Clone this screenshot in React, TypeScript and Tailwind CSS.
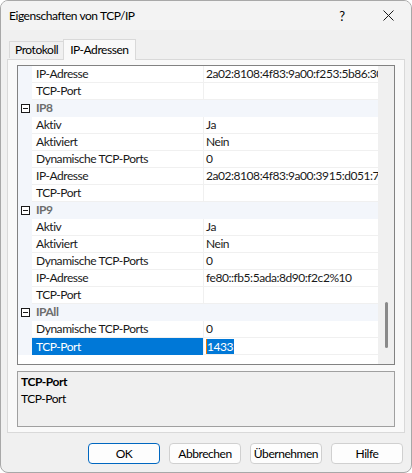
import React from "react"

type Row =
  | { kind: "group"; label: string }
  | { kind: "prop"; label: string; value: string; selected?: boolean }

const rows: Row[] = [
  { kind: "prop", label: "IP-Adresse", value: "2a02:8108:4f83:9a00:f253:5b86:3016:a1c4" },
  { kind: "prop", label: "TCP-Port", value: "" },
  { kind: "group", label: "IP8" },
  { kind: "prop", label: "Aktiv", value: "Ja" },
  { kind: "prop", label: "Aktiviert", value: "Nein" },
  { kind: "prop", label: "Dynamische TCP-Ports", value: "0" },
  { kind: "prop", label: "IP-Adresse", value: "2a02:8108:4f83:9a00:3915:d051:7a3e:1b2c" },
  { kind: "prop", label: "TCP-Port", value: "" },
  { kind: "group", label: "IP9" },
  { kind: "prop", label: "Aktiv", value: "Ja" },
  { kind: "prop", label: "Aktiviert", value: "Nein" },
  { kind: "prop", label: "Dynamische TCP-Ports", value: "0" },
  { kind: "prop", label: "IP-Adresse", value: "fe80::fb5:5ada:8d90:f2c2%10" },
  { kind: "prop", label: "TCP-Port", value: "" },
  { kind: "group", label: "IPAll" },
  { kind: "prop", label: "Dynamische TCP-Ports", value: "0" },
  { kind: "prop", label: "TCP-Port", value: "1433", selected: true },
]

function MinusBox() {
  return (
    <div className="relative w-[9px] h-[9px] border border-[#1a1a1a] bg-white">
      <div className="absolute left-[1px] right-[1px] top-[3px] h-[1px] bg-[#1a1a1a]" />
    </div>
  )
}

function GridRow({ row }: { row: Row }) {
  if (row.kind === "group") {
    return (
      <div className="flex h-[17px] items-center bg-[#f3f6fb] border-b border-[#f3f6fb]">
        <div className="w-[14px] flex justify-center pl-[1px]">
          <MinusBox />
        </div>
        <span className="pl-[4px] font-bold text-[#6d6d6d]">{row.label}</span>
      </div>
    )
  }
  return (
    <div className="flex h-[17px]">
      <div className="w-[14px] shrink-0 bg-[#f3f6fb]" />
      <div
        className={
          row.selected
            ? "w-[171px] shrink-0 flex items-center pl-[4px] bg-[#0078d7] text-white"
            : "w-[171px] shrink-0 flex items-center pl-[4px] border-b border-[#f0f0f0]"
        }
      >
        {row.label}
      </div>
      <div className="w-[1px] shrink-0 bg-[#f0f0f0]" />
      <div className="flex-1 min-w-0 flex items-center pl-[2px] overflow-hidden whitespace-nowrap border-b border-[#f0f0f0]">
        {row.selected ? (
          <span className="flex items-center h-[15px]">
            <span className="w-[1px] h-[15px] bg-[#f07800]" />
            <span className="bg-[#0078d7] text-white h-[15px] leading-[15px] pr-[1px]">{row.value}</span>
          </span>
        ) : (
          row.value
        )}
      </div>
    </div>
  )
}

function DialogButton({ label, primary }: { label: string; primary?: boolean }) {
  return (
    <button
      className={
        primary
          ? "w-[72px] h-[21px] rounded-[4px] border border-[#0067c0] bg-[#fdfdfd] text-black"
          : "w-[72px] h-[21px] rounded-[4px] border border-[#d0d0d0] bg-[#fdfdfd] text-black"
      }
    >
      {label}
    </button>
  )
}

export default function App() {
  return (
    <div
      className="w-[412px] h-[473px] bg-[#f0f0f0] border border-[#a8a8a8] rounded-[8px] overflow-hidden flex flex-col text-[12px] leading-[16px] tracking-[-0.45px] text-[#1a1a1a]"
      style={{ fontFamily: 'Lato, "Noto Sans", sans-serif' }}
    >
      {/* Title bar */}
      <div className="h-[29px] shrink-0 flex items-center pl-[8px] bg-[#f3f3f3]">
        <span className="flex-1 text-black">Eigenschaften von TCP/IP</span>
        <span className="w-[46px] text-center text-[13px] text-black">?</span>
        <span className="w-[46px] flex justify-center">
          <svg width="11" height="11" viewBox="0 0 11 11" fill="none" stroke="#1a1a1a" strokeWidth="1">
            <path d="M0.5 0.5 L10.5 10.5 M10.5 0.5 L0.5 10.5" />
          </svg>
        </span>
      </div>

      {/* Tabs */}
      <div className="h-[29px] shrink-0 flex items-end pl-[8px]">
        <div className="h-[17px] px-[5px] flex items-center border border-b-0 border-[#d9d9d9] bg-[#f0f0f0] text-black mb-[1px]">
          Protokoll
        </div>
        <div className="relative h-[21px] px-[6px] flex items-center border border-b-0 border-[#d9d9d9] bg-[#f9f9f9] text-black -ml-[1px] z-10 -mb-[1px]">
          IP-Adressen
        </div>
      </div>

      {/* Tab panel */}
      <div className="mx-[6px] h-[374px] shrink-0 border border-[#d9d9d9] bg-[#f9f9f9] px-[9px] pt-[5px] flex flex-col">
        {/* Property grid */}
        <div className="h-[300px] shrink-0 border border-[#828282] bg-white flex">
          <div className="flex-1 min-w-0 flex flex-col">
            {rows.map((row, i) => (
              <GridRow key={i} row={row} />
            ))}
          </div>
          <div className="w-[16px] shrink-0 bg-[#f0f0f0] relative">
            <div className="absolute left-[7px] top-[236px] w-[3px] h-[46px] rounded-full bg-[#8a8a8a]" />
          </div>
        </div>

        {/* Description */}
        <div className="mt-[6px] h-[56px] shrink-0 border border-[#a0a0a0] bg-[#f0f0f0] px-[3px] pt-[1px] text-black">
          <div className="font-bold leading-[17px]">TCP-Port</div>
          <div className="leading-[17px]">TCP-Port</div>
        </div>
      </div>

      {/* Buttons */}
      <div className="flex justify-end gap-[9px] pr-[8px] pt-[10px]">
        <DialogButton label="OK" primary />
        <DialogButton label="Abbrechen" />
        <DialogButton label="Übernehmen" />
        <DialogButton label="Hilfe" />
      </div>
    </div>
  )
}
